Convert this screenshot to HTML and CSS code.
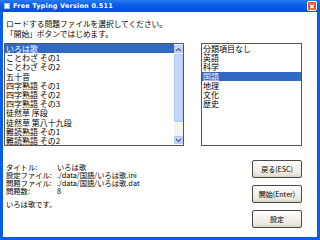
FILE: index.html
```html
<!DOCTYPE html>
<html lang="ja">
<head>
<meta charset="utf-8"/>
<title>Free Typing Version 0.511</title>
<link rel="stylesheet" href="styles.css">
</head>
<body>
<div class="win">
  <div class="titlebar">
    <span class="ico"></span>
    <span class="title">Free Typing Version 0.511</span>
    <span class="close">
      <svg width="9" height="9" viewBox="0 0 9 9"><path d="M2.5 2.5 L6.5 6.5 M6.5 2.5 L2.5 6.5" stroke="#fff" stroke-width="1.3"/></svg>
    </span>
  </div>

  <div class="client">
    <p class="intro">ロードする問題ファイルを選択してください。<br>「開始」ボタンではじめます。</p>

    <div class="lists">
      <div class="listbox main">
        <ul class="items">
          <li class="sel">いろは歌</li>
          <li>ことわざ その1</li>
          <li>ことわざ その2</li>
          <li>五十音</li>
          <li>四字熟語 その1</li>
          <li>四字熟語 その2</li>
          <li>四字熟語 その3</li>
          <li>徒然草 序段</li>
          <li>徒然草 第八十九段</li>
          <li>難読熟語 その1</li>
          <li>難読熟語 その2</li>
        </ul>
        <!-- barre de défilement -->
        <div class="vscroll">
          <div class="arrow"><svg width="7" height="5" viewBox="0 0 7 5"><path d="M1 4 L3.5 1.5 L6 4" stroke="#4d6185" stroke-width="1.2" fill="none"/></svg></div>
          <div class="track"><div class="thumb"></div></div>
          <div class="arrow"><svg width="7" height="5" viewBox="0 0 7 5"><path d="M1 1 L3.5 3.5 L6 1" stroke="#4d6185" stroke-width="1.2" fill="none"/></svg></div>
        </div>
      </div>

      <div class="listbox cats">
        <ul class="items">
          <li>分類項目なし</li>
          <li>英語</li>
          <li>科学</li>
          <li class="sel">国語</li>
          <li>地理</li>
          <li>文化</li>
          <li>歴史</li>
        </ul>
      </div>
    </div>

    <div class="bottom">
      <div class="info">
        <div class="row"><span class="key">タイトル:</span><span>いろは歌</span></div>
        <div class="row"><span class="key">設定ファイル:</span><span>./data/国語/いろは歌.ini</span></div>
        <div class="row"><span class="key">問題ファイル:</span><span>./data/国語/いろは歌.dat</span></div>
        <div class="row"><span class="key">問題数:</span><span>8</span></div>
        <p class="desc">いろは歌です。</p>
      </div>
      <div class="buttons">
        <button type="button">戻る(ESC)</button>
        <button type="button">開始(Enter)</button>
        <button type="button">設定</button>
      </div>
    </div>
  </div>
</div>
</body>
</html>
```
FILE: styles.css
```css
:root{--xp:#0a5ee6;--sel:#316ac5;--line:#555;}
*{margin:0;padding:0;box-sizing:border-box;}
body{font-family:"Noto Sans CJK JP","Noto Sans",sans-serif;font-size:8px;color:#000;background:#fff;}
.win{width:320px;height:240px;display:flex;flex-direction:column;background:var(--xp);padding:0 3px 3px 3px;}
.titlebar{height:12px;display:flex;align-items:center;background:linear-gradient(#2a7cf2,#0a5ee6 40%,#0550d6);margin:0 -3px;padding:0 3px;}
.ico{width:6px;height:6px;background:#fff;border:1px solid #9cc0f8;margin:0 3px 0 1px;}
.title{flex:1;color:#fff;font-family:"DejaVu Sans",sans-serif;font-weight:bold;font-size:6.5px;letter-spacing:.2px;line-height:12px;}
.close{width:10px;height:10px;background:#e2572f;border:1px solid #fff;border-radius:2px;display:flex;align-items:center;justify-content:center;}
.close svg{display:block;}
.client{flex:1;background:#fff;padding:7px 0 0 0;display:flex;flex-direction:column;}
.intro{font-size:7.7px;line-height:10px;padding-left:3px;white-space:nowrap;}
.lists{display:flex;gap:17px;margin:4px 0 0 1px;}
.listbox{height:103px;border:1px solid var(--line);background:#fff;display:flex;overflow:hidden;}
.main{width:180px;}
.cats{width:101px;}
.items{list-style:none;flex:1;line-height:9.2px;white-space:nowrap;overflow:hidden;}
.items li{padding-left:1px;height:9.2px;}
.items li.sel{background:var(--sel);color:#fff;}
.vscroll{width:9px;display:flex;flex-direction:column;background:#f4f4f0;margin:1px 0;}
.arrow{height:8px;background:#c6d6fc;border:1px solid #b4c8f6;border-radius:1px;display:flex;align-items:center;justify-content:center;}
.track{flex:1;padding:1px 0;}
.thumb{height:68px;background:#c6d6fc;border:1px solid #b4c8f6;border-radius:1px;}
.bottom{display:flex;justify-content:space-between;padding:14px 15px 0 3px;}
.info{padding-top:3px;font-size:7.3px;}
.row{display:flex;line-height:8px;white-space:nowrap;}
.key{width:51px;}
.desc{margin-top:5px;line-height:8px;}
.buttons{display:flex;flex-direction:column;gap:7px;}
button{width:50px;height:18px;font-family:inherit;font-size:7px;background:linear-gradient(#fefefd,#ece9df 80%,#d8d3c4);border:1px solid #4a4a4a;border-radius:2px;color:#000;}
```
